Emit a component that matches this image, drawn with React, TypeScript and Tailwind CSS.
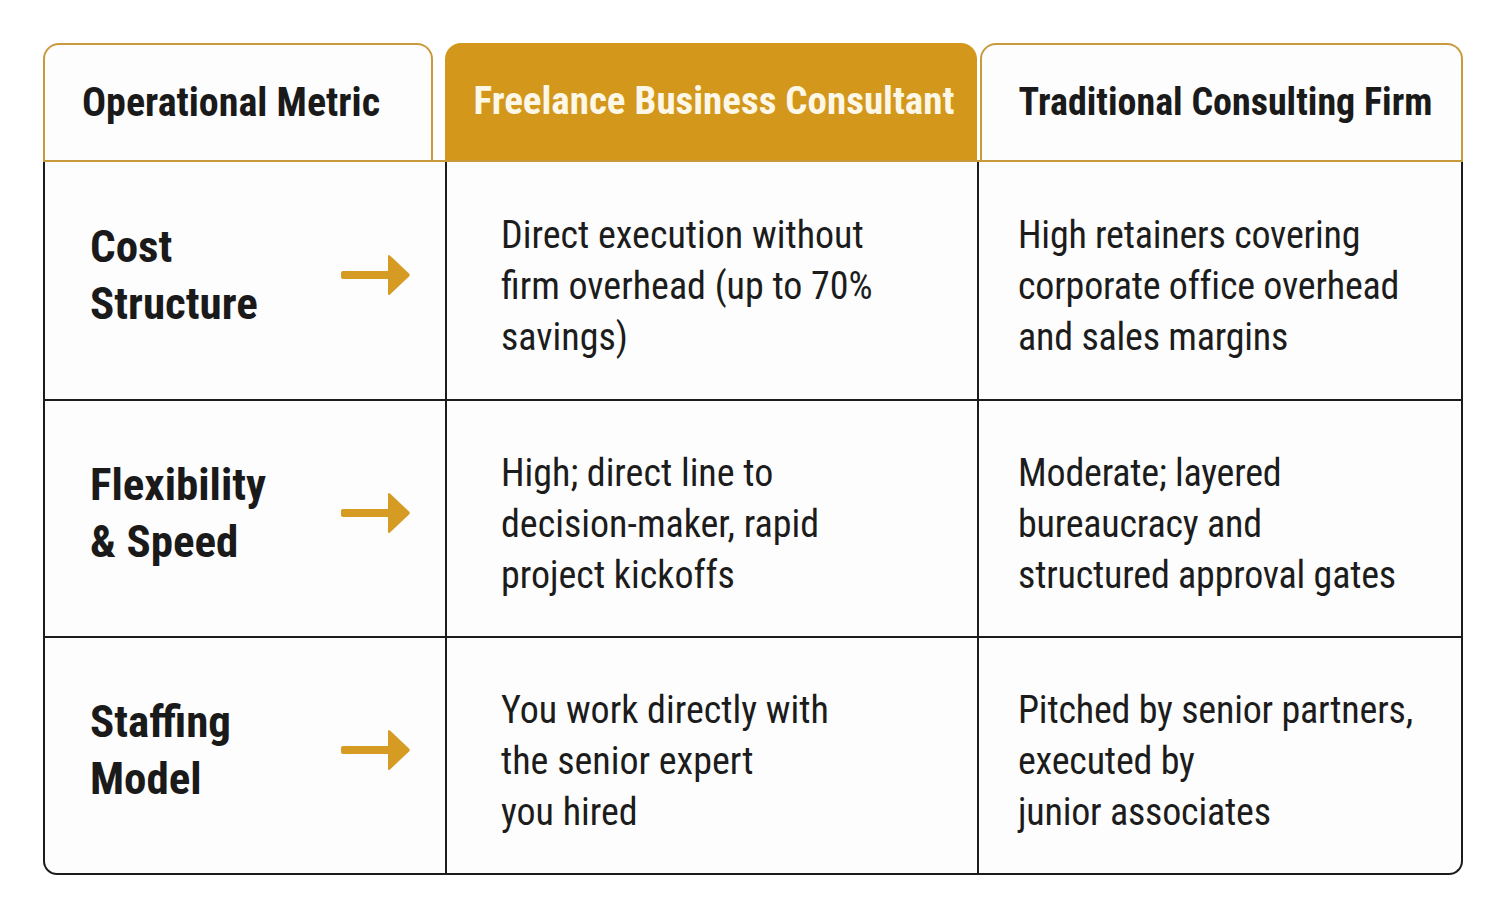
import React from "react";

const rows = [
  {
    label: ["Cost", "Structure"],
    freelance: ["Direct execution without", "firm overhead (up to 70%", "savings)"],
    firm: ["High retainers covering", "corporate office overhead", "and sales margins"],
  },
  {
    label: ["Flexibility", "& Speed"],
    freelance: ["High; direct line to", "decision-maker, rapid", "project kickoffs"],
    firm: ["Moderate; layered", "bureaucracy and", "structured approval gates"],
  },
  {
    label: ["Staffing", "Model"],
    freelance: ["You work directly with", "the senior expert", "you hired"],
    firm: ["Pitched by senior partners,", "executed by", "junior associates"],
  },
];

const bold = "font-['Roboto_Condensed','Liberation_Sans',sans-serif] font-bold whitespace-nowrap";
const regular = "font-['Roboto_Condensed','Liberation_Sans',sans-serif] whitespace-nowrap";

function Arrow() {
  return (
    <svg width="70" height="42" viewBox="0 0 70 42" className="shrink-0">
      <rect x="0" y="17" width="50" height="8" rx="2" fill="#d59b22" />
      <path d="M47 2.5 Q47 0 49 1.5 L68 19.5 Q69.5 21 68 22.5 L49 40.5 Q47 42 47 39.5 Z" fill="#d59b22" />
    </svg>
  );
}

function Lines({ lines }: { lines: string[] }) {
  return (
    <div>
      {lines.map((l) => (
        <div key={l}>{l}</div>
      ))}
    </div>
  );
}

export default function App() {
  return (
    <div className="min-h-screen bg-white pt-[43px] pl-[43px]">
      <div className="w-[1420px]">
        <div className="flex h-[117px]">
          <div
            className={`w-[390px] flex items-center justify-center pr-[14px] rounded-t-[16px] border-2 border-b-0 border-[#c99a3c] bg-[#fdfdfd] text-[40px] text-[#1a1a1a] ${bold}`}
          >
            Operational Metric
          </div>
          <div
            className={`ml-[12px] w-[532px] flex items-center justify-center pl-[6px] rounded-t-[16px] bg-[#d3981b] text-[39px] text-[#fdf7e8] ${bold}`}
          >
            Freelance Business Consultant
          </div>
          <div
            className={`ml-[3px] w-[483px] flex items-center justify-center pl-[8px] rounded-t-[16px] border-2 border-b-0 border-[#c99a3c] bg-[#fdfdfd] text-[38px] text-[#1a1a1a] ${bold}`}
          >
            Traditional Consulting Firm
          </div>
        </div>

        <div className="border-t-2 border-[#c99a3c]">
          <div className="grid grid-cols-[400px_532px_486px] border-x-2 border-b-2 border-[#1c1c1c] rounded-b-[14px] bg-[#fdfdfd]">
            {rows.map((r, i) => (
              <React.Fragment key={i}>
                <div
                  className={`h-[237px] flex items-center justify-between pl-[45px] pr-[34px] pb-3 ${i > 0 ? "border-t-2 border-[#1c1c1c]" : ""}`}
                >
                  <div className={`text-[45px] leading-[57px] text-[#1a1a1a] ${bold}`}>
                    <Lines lines={r.label} />
                  </div>
                  <Arrow />
                </div>
                <div
                  className={`h-[237px] flex items-center pl-[54px] pt-3 border-l-2 border-[#1c1c1c] text-[38px] leading-[51px] text-[#1c1c1c] ${regular} ${i > 0 ? "border-t-2" : ""}`}
                >
                  <Lines lines={r.freelance} />
                </div>
                <div
                  className={`h-[237px] flex items-center pl-[39px] pt-3 border-l-2 border-[#1c1c1c] text-[38px] leading-[51px] text-[#1c1c1c] tracking-[-0.2px] ${regular} ${i > 0 ? "border-t-2" : ""}`}
                >
                  <Lines lines={r.firm} />
                </div>
              </React.Fragment>
            ))}
          </div>
        </div>
      </div>
    </div>
  );
}
